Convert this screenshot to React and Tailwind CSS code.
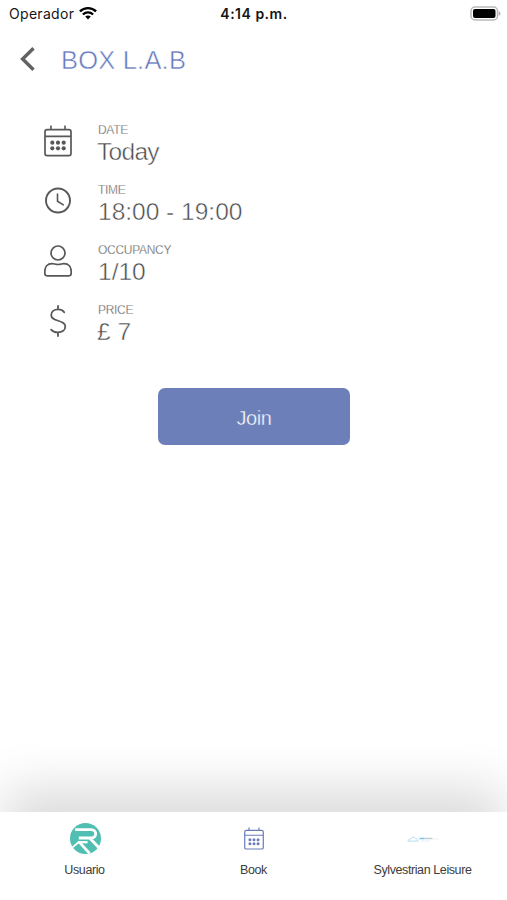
import React from "react";

const CalendarIcon = ({ className }) => (
  <svg viewBox="0 0 28 32" fill="none" stroke="currentColor" className={className}>
    <rect x="1" y="4.7" width="26" height="26" rx="2.2" strokeWidth="1.7" />
    <path d="M1 11.4h26M7 0.5v4.2M21 0.5v4.2" strokeWidth="1.6" />
    <g fill="currentColor" stroke="none">
      <circle cx="8.3" cy="17.7" r="2.1" />
      <circle cx="14" cy="17.7" r="2.1" />
      <circle cx="19.7" cy="17.7" r="2.1" />
      <circle cx="8.3" cy="23.3" r="2.1" />
      <circle cx="14" cy="23.3" r="2.1" />
      <circle cx="19.7" cy="23.3" r="2.1" />
    </g>
  </svg>
);

const ClockIcon = ({ className }) => (
  <svg viewBox="0 0 28 28" fill="none" stroke="currentColor" className={className}>
    <circle cx="14" cy="13.5" r="12" strokeWidth="1.9" />
    <path d="M13.5 7.1v7.2l5.8 3.6" strokeWidth="1.6" strokeLinecap="round" />
  </svg>
);

const PersonIcon = ({ className }) => (
  <svg viewBox="0 0 28 32" fill="none" stroke="currentColor" strokeWidth="1.7" className={className}>
    <circle cx="14" cy="8" r="7" />
    <path
      d="M8 18.6c2 0 3.4.9 6 .9s4-.9 6-.9c4.6 0 7.2 3.2 7.2 7.6v2c0 1.7-1 2.7-2.7 2.7h-21c-1.7 0-2.7-1-2.7-2.7v-2c0-4.4 2.6-7.6 7.2-7.6z"
      strokeLinejoin="round"
    />
  </svg>
);

const DollarIcon = ({ className }) => (
  <svg
    viewBox="0 0 18 32"
    fill="none"
    stroke="currentColor"
    strokeWidth="1.8"
    strokeLinecap="round"
    className={className}
  >
    <path d="M15.2 7.2C13.8 5.2 11.6 4.4 9 4.4c-3.9 0-6.8 2.2-6.8 5.5 0 7.1 14.1 4.6 14.1 11.7 0 3.5-3 5.7-7.3 5.7-3.3 0-5.5-.9-6.8-2.7M9 1v3.3M9 27.4V31" />
  </svg>
);

const BrandLogo = () => (
  <svg viewBox="0 0 30 30" className="ml-px h-[31px] w-[31px]">
    <circle cx="15" cy="15" r="15" fill="#50bfb2" />
    <g fill="none" stroke="#fff">
      <path d="M5 6.5h15.5c5.800 0 5.800 8 0 8H8.500" strokeWidth="2.700" />
      <path d="M19 14.500L28.500 24.500" strokeWidth="2.700" />
      <path d="M9 18.500L19 29.500" strokeWidth="2.600" />
      <path d="M7.500 18.600h9.500" strokeWidth="2.200" />
      <path d="M2.500 23.500l6.500-5.500" strokeWidth="1.800" />
    </g>
  </svg>
);

const CloudLogo = () => (
  <svg viewBox="0 0 32 8" className="h-2 w-8">
    <path
      d="M1 6.2c0-1.5 1.2-2 2.5-2C4 2 7.8 1.5 8.7 3.6c1.4-.2 2.3.8 2.3 2.4z"
      fill="none"
      stroke="#a9dced"
      strokeWidth=".9"
    />
    <path d="M12.5 3.5h5" stroke="#7cc8e6" strokeWidth="1.6" />
    <path d="M17.5 3.5h8" stroke="#c3cbd2" strokeWidth="1.5" />
    <path d="M14 6h9" stroke="#d5ebf4" strokeWidth=".7" />
    <path d="M26 4h6" stroke="#e6ebee" strokeWidth=".7" />
  </svg>
);

const details = [
  { label: "DATE", value: "Today", Icon: CalendarIcon, size: "h-8 w-7", text: "-ml-px tracking-[-0.7px]" },
  { label: "TIME", value: "18:00 - 19:00", Icon: ClockIcon, size: "h-7 w-7", text: "" },
  { label: "OCCUPANCY", value: "1/10", Icon: PersonIcon, size: "h-8 w-7", text: "" },
  { label: "PRICE", value: "£ 7", Icon: DollarIcon, size: "h-8 w-[18px]", text: "-ml-px" },
];

const tabs = [
  { name: "Usuario", icon: <BrandLogo /> },
  { name: "Book", icon: <CalendarIcon className="h-[23px] w-5 text-[#6b7cba]" /> },
  { name: "Sylvestrian Leisure", icon: <CloudLogo /> },
];

const App = () => {
  return (
    <div className="flex h-[900px] w-full flex-col overflow-hidden bg-white font-['Liberation_Sans',Arial,sans-serif] text-[#58585a]">
      {/* Status bar */}
      <header className="grid h-[27px] grid-cols-3 items-center pr-[6px] pl-[9px] font-['Inter',sans-serif] text-[14px] text-[#151515]">
        <div className="flex items-center gap-[5px]">
          <span className="tracking-[0.3px]">Operador</span>
          <svg viewBox="0 0 18 14" className="mb-px h-[14px] w-[18px]" fill="none" stroke="#000" strokeWidth="2.4">
            <path d="M.9 5.4c4.6-4.4 11.6-4.4 16.2 0M3.9 8.5c2.9-2.8 7.3-2.8 10.2 0" />
            <path d="M9 13.5L6.2 10.6c1.6-1.4 4-1.4 5.6 0z" fill="#000" stroke="none" />
          </svg>
        </div>
        <span className="-ml-[2px] text-center font-semibold tracking-[0.5px] whitespace-nowrap">4:14 p.m.</span>
        <svg viewBox="0 0 31 15" className="h-[15px] w-[31px] justify-self-end">
          <rect x="1" y="1" width="26.5" height="13" rx="4" fill="#fff" stroke="#b9b9b9" strokeWidth="1.5" />
          <rect x="3" y="3" width="22.5" height="9" rx="2" fill="#000" />
          <path d="M28.7 5.2c2.3.7 2.3 3.9 0 4.6z" fill="#b0b0b0" />
        </svg>
      </header>

      {/* Title */}
      <div className="flex h-[63px] items-center gap-[26px] pl-5">
        <svg viewBox="0 0 15 24" className="h-6 w-[15px]" fill="none" stroke="#626262" strokeWidth="3.4">
          <path d="M13.5 1.3L2.6 12l10.9 10.7" />
        </svg>
        <h1 className="pt-[3px] text-[25.5px] tracking-[0.2px] whitespace-nowrap text-[#6478bd] [-webkit-text-stroke:0.5px_white]">
          BOX L.A.B
        </h1>
      </div>

      {/* Booking details */}
      <main className="flex flex-1 flex-col pt-[29px]">
        {details.map(({ label, value, Icon, size, text }) => (
          <div key={label} className="flex h-[60px] pl-11">
            <div className="flex h-11 w-7 items-center justify-center">
              <Icon className={size} />
            </div>
            <div className="pt-[3px] pl-[26px]">
              <p className="text-[12px] leading-4 tracking-[-0.3px] text-[#505052] [-webkit-text-stroke:0.3px_white]">
                {label}
              </p>
              <p
                className={`text-[24.5px] leading-7 whitespace-nowrap text-[#48484a] [-webkit-text-stroke:0.5px_white] ${text}`}
              >
                {value}
              </p>
            </div>
          </div>
        ))}
        <button className="mt-[29px] ml-[158px] h-[57px] w-[192px] rounded-[7px] bg-[#6d7fb8] pt-[3px] text-[20px] tracking-[-0.4px] text-white [-webkit-text-stroke:0.4px_#6d7fb8]">
          Join
        </button>
      </main>

      {/* Bottom tabs */}
      <nav className="grid h-[88px] grid-cols-3 bg-white shadow-[0_-28px_50px_-4px_rgba(0,0,0,0.14)]">
        {tabs.map((tab) => (
          <div key={tab.name} className="flex flex-col items-center pt-[11px]">
            <div className="flex h-[31px] items-center">{tab.icon}</div>
            <span className="mt-[8px] text-[12.5px] leading-4 tracking-[-0.4px] whitespace-nowrap text-[#3c3c3c]">
              {tab.name}
            </span>
          </div>
        ))}
      </nav>
    </div>
  );
};

export default App;
